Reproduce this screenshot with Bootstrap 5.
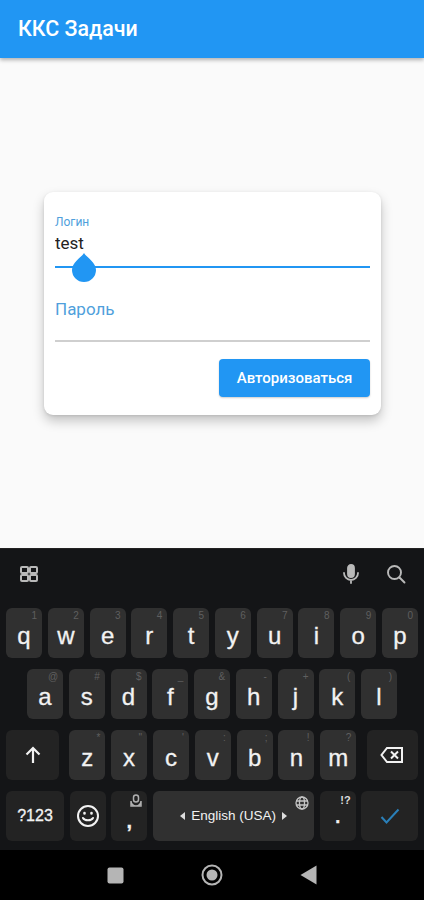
<!DOCTYPE html>
<html lang="ru">

<head>
  <meta charset="UTF-8">
  <meta name="viewport" content="width=device-width, initial-scale=1.0">
  <title>ККС Задачи</title>
  <link href="https://cdn.jsdelivr.net/npm/bootstrap@5.3.0/dist/css/bootstrap.min.css" rel="stylesheet">
  <style>
    body { background: #fafafa; font-family: Roboto, "Liberation Sans", sans-serif; }
    .phone { width: 424px; height: 900px; overflow: hidden; }
    .app-bar { height: 58px; background: #2196f3; color: #fff; font-size: 21.4px; font-weight: 500; padding-left: 18px; box-shadow: 0 2px 4px rgba(0,0,0,.3); position: relative; }
    .app-body { height: 490px; padding: 134px 43px 0 44px; }
    .login-card { height: 223px; background: #fff; border-radius: 9px; padding: 23px 11px 0; box-shadow: 0 6px 12px rgba(0,0,0,.22), 0 1px 3px rgba(0,0,0,.1); }
    .field-label { color: #4f9fdc; font-size: 12px; line-height: 14px; }
    .field-value { color: #222; font-size: 17px; line-height: 19px; height: 39px; padding: 4px 0 14px; border: 0; border-bottom: 2px solid #2196f3; border-radius: 0; background: none; box-shadow: none; width: 100%; outline: 0; }
    .field-wrap { position: relative; }
    .drop-handle { position: absolute; left: 16px; top: 37px; width: 26px; height: 30px; }
    .pass-field { margin-top: 26px; height: 48px; border-bottom: 2px solid #cfcfcf; color: #4f9fdc; font-size: 17px; line-height: 19px; padding-top: 6px; }
    .login-btn { width: 151px; height: 38px; margin-top: 17px; background: #2196f3; border: 0; border-radius: 4px; color: #fff; font-size: 15px; font-weight: 500; padding: 0; box-shadow: 0 1px 2px rgba(0,0,0,.2); }
    .keyboard { height: 302px; background: #141517; padding: 0 6px; border-top: 1px solid #222; }
    .kb-tools { height: 59px; color: #b9b9b9; padding: 0 12px 9px 14px; }
    .kb-row { display: flex; gap: 5.7px; height: 50px; margin-bottom: 11px; }
    .kb-row-mid { padding-left: 21px; padding-right: 21px; }
    .kb-key { flex: 1 1 0; min-width: 0; position: relative; display: flex; align-items: center; justify-content: center; background: #303030; border-radius: 6px; color: #f2f2f2; font-family: "Liberation Sans", sans-serif; font-size: 24px; padding-top: 5px; -webkit-text-stroke: .3px #f2f2f2; }
    .kb-key i { position: absolute; top: 2px; right: 5px; font-style: normal; font-size: 10px; line-height: 12px; color: #5f5f5f; -webkit-text-stroke: 0; }
    .kb-dark { background: #232323; padding-top: 0; }
    .kb-shift { flex: 0 0 53px; margin-right: 4.5px; }
    .kb-back { flex: 0 0 51px; margin-left: 5px; }
    .kb-num { flex: 0 0 58px; font-size: 16px; }
    .kb-wide { flex: 0 0 161px; font-size: 13.5px; gap: 6px; padding-top: 0; background: #303030; -webkit-text-stroke: 0; }
    .kb-std { flex: 0 0 36px; }
    .kb-check { flex: 0 0 57px; margin-left: 0; }
    .arrow-l { width: 0; height: 0; border: 4px solid transparent; border-left: 0; border-right: 5px solid #ddd; }
    .arrow-r { width: 0; height: 0; border: 4px solid transparent; border-right: 0; border-left: 5px solid #ddd; }
    .globe-pos { position: absolute; top: 5px; right: 5px; }
    .at-pos { position: absolute; top: 3px; right: 4px; }
    .pt-hint { position: absolute; top: 3px; right: 5px; font-size: 11px; font-weight: 700; color: #ddd; line-height: 13px; -webkit-text-stroke: 0; }
    .comma-mark { font-size: 20px; font-weight: 700; margin-top: 10px; }
    .dot-mark { font-size: 18px; font-weight: 700; margin-top: 3px; }
    .nav-strip { height: 50px; background: #000; padding-left: 107px; gap: 77px; }
  </style>
</head>

<body class="m-0">
  <div class="phone">
    <div class="app-bar d-flex align-items-center">ККС Задачи</div>

    <div class="app-body">
      <div class="login-card">
        <div class="field-wrap">
          <div class="field-label">Логин</div>
          <input type="text" class="field-value" value="test">
          <svg class="drop-handle" viewBox="0 0 26 30"><path d="M13 1 C15 5 25 10 25 18 A12 12 0 0 1 1 18 C1 10 11 5 13 1Z" fill="#2196f3"/></svg>
        </div>
        <div class="pass-field">Пароль</div>
        <div class="d-flex justify-content-end">
          <button type="button" class="login-btn">Авторизоваться</button>
        </div>
      </div>
    </div>

    <div class="keyboard">
      <div class="kb-tools d-flex align-items-center justify-content-between">
        <svg width="18" height="18" viewBox="0 0 18 18" fill="none" stroke="#b9b9b9" stroke-width="2"><rect x="1" y="2" width="7" height="6" rx="1"/><rect x="10" y="2" width="7" height="6" rx="1"/><rect x="1" y="10" width="7" height="6" rx="1"/><rect x="10" y="10" width="7" height="6" rx="1"/></svg>
        <div class="d-flex align-items-center" style="gap:25px">
          <svg width="20" height="20" viewBox="0 0 20 20" fill="none" stroke="#b9b9b9" stroke-width="1.8" stroke-linecap="round"><rect x="7" y="1" width="6" height="12" rx="3" fill="#b9b9b9"/><path d="M3 9a7 7 0 0 0 14 0M10 16v3"/></svg>
          <svg width="20" height="20" viewBox="0 0 20 20" fill="none" stroke="#b9b9b9" stroke-width="1.9" stroke-linecap="round"><circle cx="8.5" cy="8.5" r="6.5"/><path d="M13.500 13.500l5 5"/></svg>
        </div>
      </div>

      <div class="kb-row">
        <div class="kb-key">q<i>1</i></div>
        <div class="kb-key">w<i>2</i></div>
        <div class="kb-key">e<i>3</i></div>
        <div class="kb-key">r<i>4</i></div>
        <div class="kb-key">t<i>5</i></div>
        <div class="kb-key">y<i>6</i></div>
        <div class="kb-key">u<i>7</i></div>
        <div class="kb-key">i<i>8</i></div>
        <div class="kb-key">o<i>9</i></div>
        <div class="kb-key">p<i>0</i></div>
      </div>
      <div class="kb-row kb-row-mid">
        <div class="kb-key">a<i>@</i></div>
        <div class="kb-key">s<i>#</i></div>
        <div class="kb-key">d<i>$</i></div>
        <div class="kb-key">f<i>_</i></div>
        <div class="kb-key">g<i>&amp;</i></div>
        <div class="kb-key">h<i>-</i></div>
        <div class="kb-key">j<i>+</i></div>
        <div class="kb-key">k<i>(</i></div>
        <div class="kb-key">l<i>)</i></div>
      </div>
      <div class="kb-row">
        <div class="kb-key kb-dark kb-shift">
          <svg width="20" height="20" viewBox="0 0 20 20" fill="none" stroke="#f2f2f2" stroke-width="2.2"><path d="M10 18V3M3.5 9.5 10 3l6.5 6.5"/></svg>
        </div>
        <div class="kb-key">z<i>*</i></div>
        <div class="kb-key">x<i>"</i></div>
        <div class="kb-key">c<i>'</i></div>
        <div class="kb-key">v<i>:</i></div>
        <div class="kb-key">b<i>;</i></div>
        <div class="kb-key">n<i>!</i></div>
        <div class="kb-key">m<i>?</i></div>
        <div class="kb-key kb-dark kb-back">
          <svg width="24" height="18" viewBox="0 0 24 18" fill="none" stroke="#f2f2f2" stroke-width="2"><path d="M7 2h15v14H7L1.5 9z"/><path d="M11 5.5l7 7M18 5.5l-7 7"/></svg>
        </div>
      </div>
      <div class="kb-row">
        <div class="kb-key kb-dark kb-num">?123</div>
        <div class="kb-key kb-dark kb-std">
          <svg width="24" height="24" viewBox="0 0 24 24" fill="none" stroke="#f2f2f2" stroke-width="2" stroke-linecap="round"><circle cx="12" cy="12" r="10"/><path d="M7 14c1.5 3 8.500 3 10 0"/><path d="M8.500 9v.5M15.500 9v.5" stroke-width="2.600"/></svg>
        </div>
        <div class="kb-key kb-dark kb-std">
          <span class="comma-mark">,</span>
          <svg class="at-pos" width="14" height="14" viewBox="0 0 14 14" fill="none" stroke="#b0b0b0" stroke-width="1.500"><rect x="4.500" y="1" width="5" height="7" rx="2.500"/><path d="M2 7a5 5 0 0 0 10 0v5H2z"/></svg>
        </div>
        <div class="kb-key kb-wide">
          <span class="arrow-l"></span><span>English (USA)</span><span class="arrow-r"></span>
          <svg class="globe-pos" width="14" height="14" viewBox="0 0 14 14" fill="none" stroke="#c4c4c4" stroke-width="1.300"><circle cx="7" cy="7" r="6"/><ellipse cx="7" cy="7" rx="2.500" ry="6"/><path d="M1 5h12M1 9h12"/></svg>
        </div>
        <div class="kb-key kb-dark kb-std">
          <span class="dot-mark">.</span>
          <span class="pt-hint">!?</span>
        </div>
        <div class="kb-key kb-dark kb-check">
          <svg width="20" height="16" viewBox="0 0 20 16" fill="none" stroke="#2a7fb8" stroke-width="2"><path d="M1.500 9l5 5.500L18.500 1.500"/></svg>
        </div>
      </div>
    </div>

    <div class="nav-strip d-flex align-items-center">
      <svg width="17" height="17" viewBox="0 0 17 17"><rect x="0.500" y="0.500" width="16" height="16" rx="2" fill="#b5b5b5"/></svg>
      <svg width="22" height="22" viewBox="0 0 22 22"><circle cx="11" cy="11" r="9.500" fill="none" stroke="#b5b5b5" stroke-width="2"/><circle cx="11" cy="11" r="5.500" fill="#b5b5b5"/></svg>
      <svg width="17" height="20" viewBox="0 0 17 20"><path d="M16.500 0.500v19L0.500 10z" fill="#b5b5b5"/></svg>
    </div>
  </div>

  <script src="https://cdn.jsdelivr.net/npm/bootstrap@5.3.0/dist/js/bootstrap.bundle.min.js"></script>
</body>

</html>
